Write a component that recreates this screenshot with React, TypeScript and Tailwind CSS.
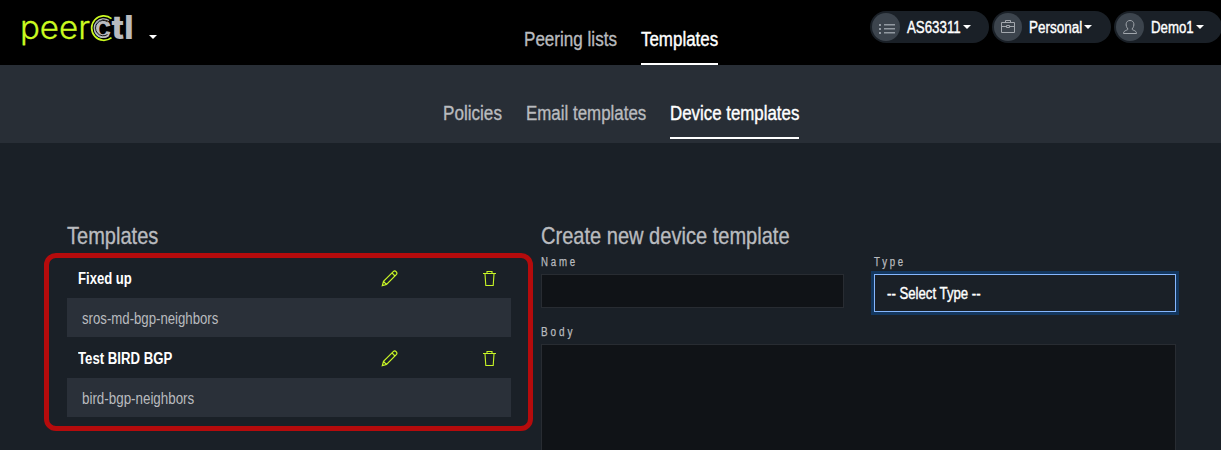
import { useLayoutEffect, useRef, useState } from "react";
import type { ReactNode } from "react";

/** Condensed text: the glyphs are narrowed so that the line is `width` pixels wide. */
function Narrow({ width, children, className = "" }: { width: number; children: string; className?: string }) {
  const ref = useRef<HTMLSpanElement>(null);
  const [scale, setScale] = useState(0.82);
  useLayoutEffect(() => {
    if (ref.current) setScale(width / ref.current.offsetWidth);
  }, [width, children]);
  return (
    <span className={`block whitespace-nowrap ${className}`} style={{ width }}>
      <span ref={ref} className="inline-block origin-left" style={{ transform: `scaleX(${scale})` }}>
        {children}
      </span>
    </span>
  );
}

function Logo() {
  return (
    <svg
      width="114"
      height="40"
      viewBox="20 12 114 40"
      fill="none"
      className="block shrink-0 overflow-visible font-['Inter','Liberation_Sans',sans-serif]"
    >
      <text x="20" y="39" fontSize="32" textLength="70" lengthAdjust="spacingAndGlyphs" fill="#cbfb20" className="font-light [stroke-width:0.3px] stroke-[#cbfb20]">
        peer
      </text>
      <text x="93.500" y="38" fontSize="32" textLength="18" lengthAdjust="spacingAndGlyphs" fill="#b9bbbf" className="font-bold">
        c
      </text>
      <text x="111.500" y="39" fontSize="32" textLength="22" lengthAdjust="spacingAndGlyphs" fill="#b9bbbf" className="font-extrabold">
        tl
      </text>
      <path d="M111.500 18.600A12.200 12.200 0 1 0 111.500 37.600" stroke="#cbfb20" strokeWidth="1.700" />
      <path d="M109 20.600A9.300 9.300 0 1 0 109 35.600" stroke="#b9bbbf" strokeWidth="1.200" />
      <path d="M107.500 21.700A7.700 7.700 0 1 0 107.500 34.500" stroke="#000" strokeWidth="0.900" />
    </svg>
  );
}

function Caret() {
  return (
    <svg width="8" height="4" viewBox="0 0 8 4" className="block" fill="#fff">
      <path d="M0 0h8L4 4z" />
    </svg>
  );
}

function ListIcon() {
  return (
    <svg width="18" height="12" viewBox="0 0 18 12" fill="#9299a1" className="block translate-x-px translate-y-0.5">
      <path d="M1 1h2v2H1zM1 5h2v2H1zM1 9h2v2H1zM6 1h11v1.500H6zM6 5h11v1.500H6zM6 9h11v1.500H6z" />
    </svg>
  );
}

function CaseIcon() {
  return (
    <svg width="16" height="16" viewBox="0 0 16 16" fill="none" stroke="#a2a7ad" className="block -translate-y-px">
      <path d="M1.500 4.500h13v10h-13zM5.500 4.500v-2h5v2M1.500 8.500h5M9.500 8.500h5M6.500 7.500h3v2h-3z" />
    </svg>
  );
}

function UserIcon() {
  return (
    <svg width="16" height="16" viewBox="0 0 16 16" fill="none" stroke="#a2a7ad" className="block">
      <path d="M6 10C3 7 3.500 1.500 8 1.500S13 7 10 10c0 1.500 4.500 1 4.500 4.500h-13C1.500 11 6 11.500 6 10z" />
    </svg>
  );
}

function Pencil() {
  return (
    <svg width="17" height="17" viewBox="0 0 17 17" fill="none" stroke="#c8f526" strokeWidth="1.200" className="block">
      <path d="M1.300 15.700 2.500 11.300 12.500 1.400c1.700-1.300 4.300 1.100 3 3L5.500 14.500zM2.500 11.300l3 3.200M11 2.900l3 3.100" />
    </svg>
  );
}

function Trash() {
  return (
    <svg width="13" height="17" viewBox="0 0 13 17" fill="none" stroke="#c8f526" strokeWidth="1.100" className="block">
      <path d="M0 3.500h13M4 3V1.500h5V3M2 4l.8 11.500h7.400L11 4" />
    </svg>
  );
}

function Pill({ icon, label, width, className }: { icon: ReactNode; label: string; width: number; className: string }) {
  return (
    <div className={`flex h-8 shrink-0 items-center rounded-full bg-[#1a2027] pl-0.5 ${className}`}>
      <span className="flex size-7 shrink-0 items-center justify-center rounded-full bg-[#3c444d]">{icon}</span>
      <Narrow width={width} className="ml-[7px] pt-0.5 text-base leading-8 text-white [-webkit-text-stroke:0.4px_#fff]">
        {label}
      </Narrow>
      <span className="ml-0.5">
        <Caret />
      </span>
    </div>
  );
}

function Tab({ label, width, active = false }: { label: string; width: number; active?: boolean }) {
  return (
    <a
      className={`block h-[41px] border-b-2 text-xl leading-[30px] ${
        active
          ? "border-white text-white [-webkit-text-stroke:0.4px_#fff]"
          : "border-transparent text-[#b9bbbf] [-webkit-text-stroke:0.35px_#b9bbbf]"
      }`}
    >
      <Narrow width={width}>{label}</Narrow>
    </a>
  );
}

function TemplateRow({ name, nameWidth, kind, kindWidth }: { name: string; nameWidth: number; kind: string; kindWidth: number }) {
  return (
    <li className="mb-0.5">
      <div className="flex h-[39px] items-center pl-[11px]">
        <Narrow width={nameWidth} className="font-bold text-white">
          {name}
        </Narrow>
        <span className="mr-[85px] ml-auto">
          <Pencil />
        </span>
        <span className="mr-[15px]">
          <Trash />
        </span>
      </div>
      <div className="flex h-[39px] items-center bg-[#2a3039] pt-0.5 pl-[15px] text-[#b9bbbf]">
        <Narrow width={kindWidth}>{kind}</Narrow>
      </div>
    </li>
  );
}

function FieldLabel({ children, width }: { children: string; width: number }) {
  return (
    <Narrow width={width} className="text-xs leading-4 tracking-[3.5px] text-[#b9bbbf] [-webkit-text-stroke:0.25px_#b9bbbf]">
      {children}
    </Narrow>
  );
}

function Heading({ children, width }: { children: string; width: number }) {
  return (
    <h2 className="text-2xl leading-7 text-[#b9bbbf] [-webkit-text-stroke:0.35px_#b9bbbf]">
      <Narrow width={width}>{children}</Narrow>
    </h2>
  );
}

export default function App() {
  return (
    <div className="relative flex h-[450px] w-[1221px] flex-col overflow-hidden bg-[#1a2027] font-['Liberation_Sans',sans-serif]">
      <header className="flex h-[65px] shrink-0 bg-black">
        <div className="flex w-[524px] shrink-0 pt-3 pl-5">
          <Logo />
          <span className="mt-[23px] ml-[15px]">
            <Caret />
          </span>
        </div>
        <nav className="flex w-[346px] shrink-0 gap-6 pt-6">
          <Tab label="Peering lists" width={93} />
          <Tab label="Templates" width={77} active />
        </nav>
        <div className="flex shrink-0 gap-[3px] pt-[11px]">
          <Pill className="w-[119px]" icon={<ListIcon />} label="AS63311" width={54} />
          <Pill className="w-[119px]" icon={<CaseIcon />} label="Personal" width={53} />
          <Pill className="w-[108px]" icon={<UserIcon />} label="Demo1" width={43} />
        </div>
      </header>

      <nav className="flex h-[78px] shrink-0 gap-6 bg-[#282e36] pt-[33px] pl-[443px]">
        <Tab label="Policies" width={59} />
        <Tab label="Email templates" width={120} />
        <Tab label="Device templates" width={129} active />
      </nav>

      <main className="flex grow gap-[30px] pt-[79px] pl-[67px]">
        <section className="w-[444px]">
          <Heading width={91}>Templates</Heading>
          <ul className="pt-[9px]">
            <TemplateRow name="Fixed up" nameWidth={54} kind="sros-md-bgp-neighbors" kindWidth={136} />
            <TemplateRow name="Test BIRD BGP" nameWidth={94} kind="bird-bgp-neighbors" kindWidth={112} />
          </ul>
        </section>

        <section className="flex w-[635px] flex-col">
          <Heading width={249}>Create new device template</Heading>
          <div className="mt-1 flex h-[70px] justify-between">
            <div className="w-[303px]">
              <FieldLabel width={37}>Name</FieldLabel>
              <div className="mt-1 h-[34px] border border-[#282c32] bg-[#101317]" />
            </div>
            <div className="w-[302px]">
              <FieldLabel width={32}>Type</FieldLabel>
              <div className="mt-1 flex h-[38px] items-center border border-[#86b7fe] pt-0.5 pl-3 text-white ring-3 ring-[#13375f]">
                <Narrow width={94} className="[-webkit-text-stroke:0.4px_#fff]">
                  -- Select Type --
                </Narrow>
              </div>
            </div>
          </div>
          <FieldLabel width={34}>Body</FieldLabel>
          <div className="mt-1 grow border border-b-0 border-[#282c32] bg-[#101317]" />
        </section>
      </main>

      <div className="pointer-events-none absolute top-[253px] left-[44px] h-[178px] w-[489px] rounded-xl border-5 border-[#b50b0c]" />
    </div>
  );
}
